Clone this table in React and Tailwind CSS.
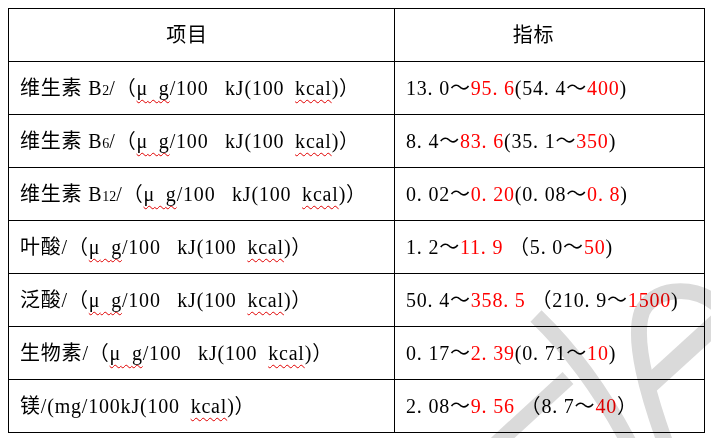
import React from 'react';

const font = { fontFamily: '"Liberation Serif", "Noto Sans CJK SC", serif' };

const Red = ({ children }) => <span className="text-[#ff0000]">{children}</span>;
const Wavy = ({ children }) => (
    <span className="underline decoration-wavy decoration-[#e00000] decoration-1 underline-offset-[4px]">{children}</span>
);
const Sub = ({ children }) => <span className="text-[14px] tracking-normal">{children}</span>;

const Unit = ({ mg }) => (
    <>
        /{mg ? '(' : '（'}
        {mg ? 'mg' : <Wavy>μ{'\u2002'}g</Wavy>}
        /100{mg ? '' : '\u2002 '}kJ(100{'\u2002'}
        <Wavy>kcal</Wavy>)）
    </>
);

const rows = [
    {
        name: <>维生素 B<Sub>2</Sub><Unit /></>,
        value: <>13. 0～<Red>95. 6</Red>(54. 4～<Red>400</Red>)</>,
    },
    {
        name: <>维生素 B<Sub>6</Sub><Unit /></>,
        value: <>8. 4～<Red>83. 6</Red>(35. 1～<Red>350</Red>)</>,
    },
    {
        name: <>维生素 B<Sub>12</Sub><Unit /></>,
        value: <>0. 02～<Red>0. 20</Red>(0. 08～<Red>0. 8</Red>)</>,
    },
    {
        name: <>叶酸<Unit /></>,
        value: <>1. 2～<Red>11. 9</Red> （5. 0～<Red>50</Red>)</>,
    },
    {
        name: <>泛酸<Unit /></>,
        value: <>50. 4～<Red>358. 5</Red> （210. 9～<Red>1500</Red>)</>,
    },
    {
        name: <>生物素<Unit /></>,
        value: <>0. 17～<Red>2. 39</Red>(0. 71～<Red>10</Red>)</>,
    },
    {
        name: <>镁<Unit mg /></>,
        value: <>2. 08～<Red>9. 56</Red> （8. 7～<Red>40</Red>）</>,
    },
];

export default function App() {
    return (
        <div className="relative w-[711px] h-[438px] bg-white overflow-hidden pt-2 pl-2" style={font}>
            <table className="border-collapse text-[20px] tracking-[0.8px] text-black leading-none">
                <thead>
                    <tr className="h-[53px]">
                        <th className="w-[386px] border border-black font-normal text-center pl-[11px] pr-[40px]">项目</th>
                        <th className="w-[310px] border border-black font-normal text-center pl-[11px] pr-[43px]">指标</th>
                    </tr>
                </thead>
                <tbody>
                    {rows.map((r, i) => (
                        <tr key={i} className="h-[53px]">
                            <td className="border border-black pl-[11px] whitespace-nowrap">{r.name}</td>
                            <td className="border border-black pl-[11px] whitespace-nowrap">{r.value}</td>
                        </tr>
                    ))}
                </tbody>
            </table>

            {/* watermark */}
            <svg className="absolute inset-0 pointer-events-none mix-blend-multiply" width="711" height="438" viewBox="0 0 711 438">
                <g fill="none" stroke="#dadada" strokeWidth="16" strokeLinecap="butt">
                    <path d="M536 316 Q590 368 630 445" />
                    <path d="M495 445 L568 378" />
                    <path d="M666 445 C648 395, 632 340, 642 312 C652 290, 690 282, 718 305" />
                    <path d="M650 384 L718 322" strokeWidth="19" />
                </g>
            </svg>
        </div>
    );
}
